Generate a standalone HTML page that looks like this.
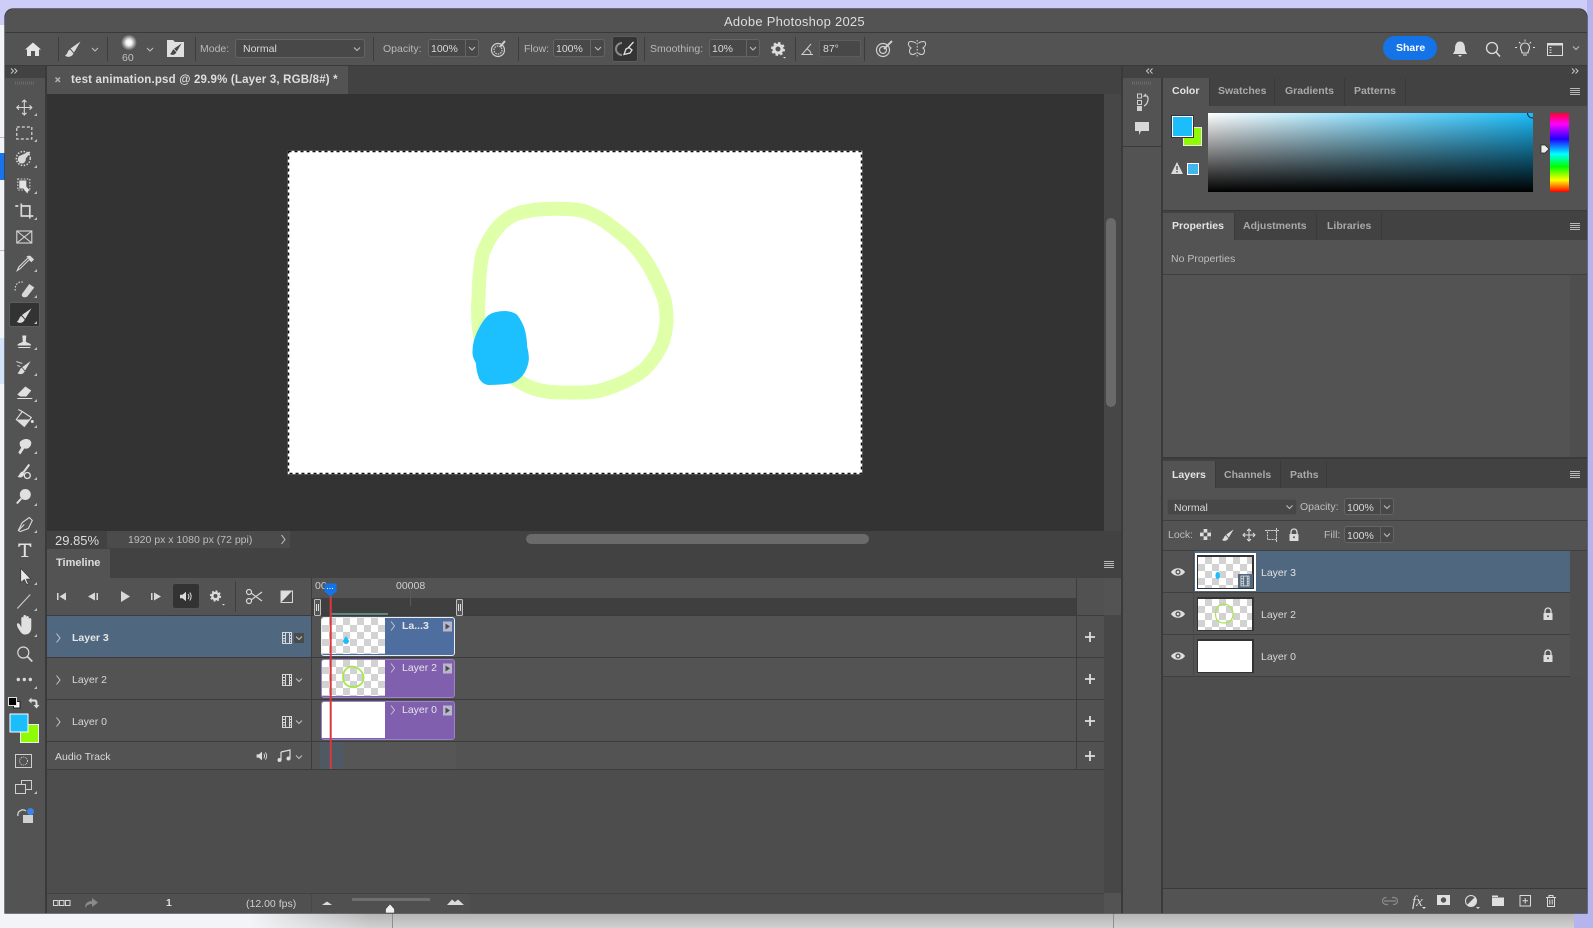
<!DOCTYPE html>
<html lang="en"><head><meta charset="utf-8"><title>Adobe Photoshop 2025</title>
<style>
html,body{margin:0;padding:0}
body{width:1593px;height:928px;position:relative;overflow:hidden;background:#f3f4f7;font-family:"Liberation Sans",sans-serif;font-size:11px;color:#cfcfcf}
.r{position:absolute;box-sizing:border-box}
.t{position:absolute;white-space:nowrap;line-height:16px;height:16px}
.b{font-weight:bold}
.i{background:#484848;border:1px solid #646464;border-radius:3px}
.ck{background:repeating-conic-gradient(#d2d2d2 0 25%,#fff 0 50%) 0 0/14px 14px}
svg{position:absolute;left:0;top:0}
</style></head><body>

<!-- outside window -->
<div class="r" style="left:0;top:0;width:1593px;height:25px;background:#cdcdf8"></div>
<div class="r" style="left:1587px;top:0;width:6px;height:928px;background:#b5b4ec"></div>
<div class="r" style="left:0;top:153px;width:5px;height:27px;background:#1a73e8"></div>
<div class="r" style="left:0;top:137px;width:5px;height:1px;background:#bbb"></div>
<div class="r" style="left:0;top:250px;width:5px;height:1px;background:#bbb"></div>
<div class="r" style="left:0;top:338px;width:5px;height:46px;background:#d5e3fa"></div>
<div class="r" style="left:0;top:913px;width:1574px;height:15px;background:linear-gradient(to bottom,rgba(243,244,247,0),rgba(243,244,247,.45)),linear-gradient(to right,#f3f4f7 250px,#b4b4b4 370px)"></div>
<div class="r" style="left:1574px;top:913px;width:19px;height:15px;background:#b5b4ec"></div>
<div class="r" style="left:392px;top:913px;width:1px;height:15px;background:#8e8e8e"></div>
<div class="r" style="left:1113px;top:913px;width:1px;height:15px;background:#8e8e8e"></div>

<!-- window -->
<div class="r" style="left:5px;top:9px;width:1582px;height:904px;background:#535353;border-radius:8px 8px 0 0;box-shadow:0 0 0 .6px #2f2f2f"></div>
<div class="r" style="left:5px;top:32px;width:1582px;height:1px;background:#3a3a3a"></div>
<div class="r" style="left:5px;top:65px;width:1582px;height:1px;background:#3a3a3a"></div>

<!-- left toolbar -->
<div class="r" style="left:5px;top:66px;width:40px;height:12px;background:#424242"></div>
<div class="r" style="left:45px;top:66px;width:2px;height:847px;background:#3a3a3a"></div>
<div class="r" style="left:9px;top:302px;width:31px;height:25px;background:#333;border:1px solid #5c5c5c;border-radius:2px"></div>

<!-- doc area -->
<div class="r" style="left:47px;top:66px;width:1074px;height:28px;background:#424242"></div>
<div class="r" style="left:47px;top:66px;width:301px;height:28px;background:#535353"></div>
<div class="r" style="left:47px;top:94px;width:1057px;height:437px;background:#333333"></div>
<div class="r" style="left:1104px;top:94px;width:17px;height:437px;background:#474747"></div>
<div class="r" style="left:1106px;top:218px;width:10px;height:189px;background:#6a6a6a;border-radius:5px"></div>
<div class="r" style="left:47px;top:531px;width:1074px;height:17px;background:#424242"></div>
<div class="r" style="left:107px;top:531px;width:183px;height:17px;background:#4b4b4b"></div>
<div class="r" style="left:526px;top:534px;width:343px;height:10px;background:#6a6a6a;border-radius:5px"></div>

<div class="t b" style="left:71px;top:72px;font-size:11.5px;color:#dedede;letter-spacing:.18px">test animation.psd @ 29.9% (Layer 3, RGB/8#) *</div>
<div class="t" style="left:55px;top:533px;font-size:13px;color:#dcdcdc">29.85%</div>
<div class="t" style="left:128px;top:532px;font-size:10.5px;color:#bdbdbd">1920 px x 1080 px (72 ppi)</div>

<!-- timeline -->
<div class="r" style="left:47px;top:548px;width:1057px;height:365px;background:#4d4d4d"></div>
<div class="r" style="left:1104px;top:548px;width:17px;height:365px;background:#474747"></div>
<div class="r" style="left:47px;top:548px;width:1074px;height:30px;background:#424242"></div>
<div class="r" style="left:47px;top:549px;width:63px;height:29px;background:#535353"></div>
<div class="t b" style="left:56px;top:555px;color:#dedede">Timeline</div>
<div class="r" style="left:47px;top:578px;width:1074px;height:37px;background:#535353"></div>
<div class="r" style="left:1076px;top:578px;width:1px;height:191px;background:#3c3c3c"></div>
<div class="r" style="left:1077px;top:578px;width:27px;height:191px;background:#515151"></div>
<div class="r" style="left:312px;top:598px;width:764px;height:17px;background:#3f3f3f"></div>
<div class="r" style="left:311px;top:578px;width:1px;height:191px;background:#3c3c3c"></div>
<div class="r" style="left:172px;top:583px;width:28px;height:26px;background:#333;border:1px solid #555;border-radius:3px"></div>
<div class="r" style="left:235px;top:581px;width:1px;height:31px;background:#3f3f3f"></div>
<div class="t" style="left:315px;top:578px;font-size:10.5px;color:#d0d0d0">00</div>
<div class="t" style="left:396px;top:578px;font-size:10.5px;color:#d0d0d0">00008</div>
<div class="r" style="left:331px;top:613px;width:57px;height:2px;background:#5f8a86"></div>

<!-- tracks -->
<div class="r" style="left:47px;top:615px;width:1057px;height:1px;background:#3c3c3c"></div>
<div class="r" style="left:47px;top:616px;width:264px;height:41px;background:#4f677f"></div>
<div class="r" style="left:312px;top:616px;width:764px;height:41px;background:#535353"></div>
<div class="r" style="left:47px;top:658px;width:264px;height:41px;background:#535353"></div>
<div class="r" style="left:312px;top:658px;width:764px;height:41px;background:#535353"></div>
<div class="r" style="left:47px;top:700px;width:264px;height:41px;background:#535353"></div>
<div class="r" style="left:312px;top:700px;width:764px;height:41px;background:#535353"></div>
<div class="r" style="left:47px;top:742px;width:264px;height:27px;background:#535353"></div>
<div class="r" style="left:312px;top:742px;width:764px;height:27px;background:#535353"></div>
<div class="r" style="left:320px;top:742px;width:24px;height:27px;background:#4f5964"></div>
<div class="r" style="left:344px;top:742px;width:112px;height:27px;background:#565656"></div>
<div class="r" style="left:47px;top:657px;width:1057px;height:1px;background:#3c3c3c"></div>
<div class="r" style="left:47px;top:699px;width:1057px;height:1px;background:#3c3c3c"></div>
<div class="r" style="left:47px;top:741px;width:1057px;height:1px;background:#3c3c3c"></div>
<div class="r" style="left:47px;top:769px;width:1057px;height:1px;background:#3c3c3c"></div>
<div class="r" style="left:294px;top:633px;width:10px;height:10px;background:#4a4a4a"></div>

<div class="t b" style="left:72px;top:630px;color:#e6e6e6;font-size:10.5px">Layer 3</div>
<div class="t" style="left:72px;top:672px;color:#d8d8d8;font-size:10.5px">Layer 2</div>
<div class="t" style="left:72px;top:714px;color:#d8d8d8;font-size:10.5px">Layer 0</div>
<div class="t" style="left:55px;top:749px;color:#d8d8d8;font-size:10.5px">Audio Track</div>

<!-- clips -->
<div class="r" style="left:321px;top:617px;width:134px;height:39px;background:#4f6ea0;border:1.5px solid #e6edf5;border-radius:3px;overflow:hidden"><div class="r ck" style="left:0;top:0;width:63px;height:36px"></div></div>
<div class="r" style="left:321px;top:659px;width:134px;height:39px;background:#7f5fae;border:1.5px solid #9c82c8;border-radius:3px;overflow:hidden"><div class="r ck" style="left:0;top:0;width:63px;height:36px"></div></div>
<div class="r" style="left:321px;top:701px;width:134px;height:39px;background:#7f5fae;border:1.5px solid #9c82c8;border-radius:3px;overflow:hidden"><div class="r" style="left:0;top:0;width:63px;height:36px;background:#fff"></div></div>
<div class="t b" style="left:402px;top:618px;font-size:10.5px;color:#e6e6e6">La...3</div>
<div class="t" style="left:402px;top:660px;font-size:10.5px;color:#e6e6e6">Layer 2</div>
<div class="t" style="left:402px;top:702px;font-size:10.5px;color:#e6e6e6">Layer 0</div>

<!-- timeline bottom -->
<div class="r" style="left:47px;top:893px;width:1057px;height:1px;background:#424242"></div>
<div class="r" style="left:47px;top:894px;width:423px;height:19px;background:#505050"></div>
<div class="r" style="left:1104px;top:893px;width:17px;height:20px;background:#535353"></div>
<div class="r" style="left:311px;top:894px;width:1px;height:19px;background:#484848"></div>
<div class="r" style="left:352px;top:898px;width:78px;height:3px;background:#6f6f6f"></div>
<div class="t b" style="left:166px;top:895px;font-size:10.5px;color:#dedede">1</div>
<div class="t" style="left:246px;top:896px;font-size:10.5px;color:#cfcfcf">(12.00 fps)</div>

<!-- panel column -->
<div class="r" style="left:1121px;top:66px;width:2px;height:847px;background:#3a3a3a"></div>
<div class="r" style="left:1123px;top:66px;width:464px;height:12px;background:#424242"></div>
<div class="r" style="left:1161px;top:78px;width:2px;height:835px;background:#3a3a3a"></div>
<div class="r" style="left:1123px;top:146px;width:38px;height:1px;background:#3a3a3a"></div>

<!-- color panel -->
<div class="r" style="left:1163px;top:78px;width:424px;height:28px;background:#424242"></div>
<div class="r" style="left:1163px;top:78px;width:46px;height:28px;background:#535353"></div>
<div class="r" style="left:1209px;top:78px;width:66px;height:28px;border-left:1px solid #3a3a3a;border-right:1px solid #3a3a3a"></div>
<div class="r" style="left:1275px;top:78px;width:70px;height:28px;border-right:1px solid #3a3a3a"></div>
<div class="r" style="left:1345px;top:78px;width:61px;height:28px;border-right:1px solid #3a3a3a"></div>
<div class="t b" style="left:1172px;top:83px;font-size:10.5px;color:#e4e4e4">Color</div>
<div class="t b" style="left:1218px;top:83px;font-size:10.5px;color:#a9a9a9">Swatches</div>
<div class="t b" style="left:1285px;top:83px;font-size:10.5px;color:#a9a9a9">Gradients</div>
<div class="t b" style="left:1354px;top:83px;font-size:10.5px;color:#a9a9a9">Patterns</div>
<div class="r" style="left:1208px;top:113px;width:325px;height:79px;background:linear-gradient(to bottom,rgba(0,0,0,0),#000),linear-gradient(to right,#fff,#1cbdfb)"></div>
<div class="r" style="left:1550px;top:113px;width:19px;height:79px;background:linear-gradient(#ff0030,#ff00ff 14%,#2000ff 33%,#00ffff 52%,#00ff00 68%,#ffff00 85%,#ff0000)"></div>
<div class="r" style="left:1183px;top:127px;width:19px;height:19px;background:#8ffc05;border:1px solid #e8e8e8"></div>
<div class="r" style="left:1172px;top:116px;width:21px;height:21px;background:#1cbdfb;border:1px solid #fff;outline:1px solid #333"></div>
<div class="r" style="left:1187px;top:163px;width:12px;height:12px;background:#42b6ea;border:1px solid #fff"></div>
<div class="r" style="left:1163px;top:210px;width:424px;height:1px;background:#3a3a3a"></div>

<!-- properties -->
<div class="r" style="left:1163px;top:211px;width:424px;height:29px;background:#424242"></div>
<div class="r" style="left:1163px;top:213px;width:71px;height:27px;background:#535353"></div>
<div class="r" style="left:1234px;top:213px;width:83px;height:27px;border-left:1px solid #3a3a3a;border-right:1px solid #3a3a3a"></div>
<div class="r" style="left:1317px;top:213px;width:65px;height:27px;border-right:1px solid #3a3a3a"></div>
<div class="t b" style="left:1172px;top:218px;font-size:10.5px;color:#e4e4e4">Properties</div>
<div class="t b" style="left:1243px;top:218px;font-size:10.5px;color:#a9a9a9">Adjustments</div>
<div class="t b" style="left:1327px;top:218px;font-size:10.5px;color:#a9a9a9">Libraries</div>
<div class="t" style="left:1171px;top:251px;font-size:10.5px;color:#bdbdbd">No Properties</div>
<div class="r" style="left:1163px;top:274px;width:424px;height:1px;background:#3f3f3f"></div>
<div class="r" style="left:1570px;top:275px;width:17px;height:182px;background:#4e4e4e"></div>
<div class="r" style="left:1163px;top:457px;width:424px;height:2px;background:#3a3a3a"></div>

<!-- layers -->
<div class="r" style="left:1163px;top:459px;width:424px;height:29px;background:#424242"></div>
<div class="r" style="left:1163px;top:461px;width:52px;height:27px;background:#535353"></div>
<div class="r" style="left:1215px;top:461px;width:66px;height:27px;border-left:1px solid #3a3a3a;border-right:1px solid #3a3a3a"></div>
<div class="r" style="left:1281px;top:461px;width:46px;height:27px;border-right:1px solid #3a3a3a"></div>
<div class="t b" style="left:1172px;top:467px;font-size:10.5px;color:#e4e4e4">Layers</div>
<div class="t b" style="left:1224px;top:467px;font-size:10.5px;color:#a9a9a9">Channels</div>
<div class="t b" style="left:1290px;top:467px;font-size:10.5px;color:#a9a9a9">Paths</div>

<div class="r" style="left:1167px;top:499px;width:130px;height:16px;background:#474747;border:1px solid #4f4f4f;border-radius:3px"></div>
<div class="t" style="left:1174px;top:500px;font-size:10.5px;color:#dadada">Normal</div>
<div class="t" style="left:1300px;top:499px;font-size:10.5px;color:#bdbdbd">Opacity:</div>
<div class="r i" style="left:1344px;top:498px;width:50px;height:17px"></div>
<div class="r" style="left:1380px;top:498px;width:1px;height:17px;background:#646464"></div>
<div class="t" style="left:1347px;top:500px;font-size:10.5px;color:#dadada">100%</div>
<div class="r" style="left:1163px;top:520px;width:424px;height:1px;background:#3f3f3f"></div>
<div class="t" style="left:1168px;top:527px;font-size:10.5px;color:#bdbdbd">Lock:</div>
<div class="t" style="left:1324px;top:527px;font-size:10.5px;color:#bdbdbd">Fill:</div>
<div class="r i" style="left:1344px;top:526px;width:50px;height:17px"></div>
<div class="r" style="left:1380px;top:526px;width:1px;height:17px;background:#646464"></div>
<div class="t" style="left:1347px;top:528px;font-size:10.5px;color:#dadada">100%</div>

<div class="r" style="left:1163px;top:550px;width:424px;height:1px;background:#3f3f3f"></div>
<div class="r" style="left:1193px;top:551px;width:377px;height:41px;background:#4f677f"></div>
<div class="r" style="left:1163px;top:592px;width:407px;height:1px;background:#3f3f3f"></div>
<div class="r" style="left:1163px;top:634px;width:407px;height:1px;background:#3f3f3f"></div>
<div class="r" style="left:1163px;top:676px;width:407px;height:1px;background:#3f3f3f"></div>
<div class="r" style="left:1163px;top:677px;width:424px;height:211px;background:#4d4d4d"></div>
<div class="r" style="left:1570px;top:551px;width:17px;height:126px;background:#4e4e4e"></div>
<div class="r" style="left:1193px;top:551px;width:1px;height:126px;background:#484848"></div>

<div class="r" style="left:1195px;top:553px;width:61px;height:38px;background:#fff"></div>
<div class="r" style="left:1197px;top:555px;width:57px;height:34px;background:#333"></div>
<div class="r ck" style="left:1198px;top:557px;width:54px;height:31px"></div>
<div class="r" style="left:1238px;top:574px;width:15px;height:14px;background:#4f677f"></div>
<div class="r" style="left:1197px;top:597px;width:57px;height:34px;background:#333"></div>
<div class="r ck" style="left:1198px;top:599px;width:54px;height:31px"></div>
<div class="r" style="left:1197px;top:639px;width:57px;height:34px;background:#333"></div>
<div class="r" style="left:1198px;top:641px;width:54px;height:31px;background:#fff"></div>
<div class="t" style="left:1261px;top:565px;font-size:10.5px;color:#e2e2e2">Layer 3</div>
<div class="t" style="left:1261px;top:607px;font-size:10.5px;color:#d8d8d8">Layer 2</div>
<div class="t" style="left:1261px;top:649px;font-size:10.5px;color:#d8d8d8">Layer 0</div>
<div class="r" style="left:1163px;top:888px;width:424px;height:1px;background:#3a3a3a"></div>
<div class="r" style="left:1163px;top:889px;width:424px;height:24px;background:#535353"></div>

<!-- options bar -->
<div class="r" style="left:58px;top:37px;width:1px;height:24px;background:#3d3d3d"></div>
<div class="r" style="left:107px;top:37px;width:1px;height:24px;background:#3d3d3d"></div>
<div class="r" style="left:195px;top:37px;width:1px;height:24px;background:#3d3d3d"></div>
<div class="r" style="left:373px;top:37px;width:1px;height:24px;background:#3d3d3d"></div>
<div class="r" style="left:518px;top:37px;width:1px;height:24px;background:#3d3d3d"></div>
<div class="r" style="left:644px;top:37px;width:1px;height:24px;background:#3d3d3d"></div>
<div class="r" style="left:795px;top:37px;width:1px;height:24px;background:#3d3d3d"></div>
<div class="r" style="left:864px;top:37px;width:1px;height:24px;background:#3d3d3d"></div>
<div class="r i" style="left:235px;top:39px;width:130px;height:19px"></div>
<div class="r i" style="left:428px;top:39px;width:51px;height:18px"></div>
<div class="r" style="left:465px;top:39px;width:1px;height:18px;background:#646464"></div>
<div class="r i" style="left:553px;top:39px;width:52px;height:18px"></div>
<div class="r" style="left:590px;top:39px;width:1px;height:18px;background:#646464"></div>
<div class="r" style="left:612px;top:36px;width:26px;height:26px;background:#343434;border:1px solid #5c5c5c;border-radius:3px"></div>
<div class="r i" style="left:709px;top:39px;width:51px;height:18px"></div>
<div class="r" style="left:746px;top:39px;width:1px;height:18px;background:#646464"></div>
<div class="r" style="left:819px;top:40px;width:42px;height:17px;background:#484848;border:1px solid #5c5c5c"></div>
<div class="r" style="left:1383px;top:36px;width:54px;height:24px;border-radius:12px;background:#1473e6"></div>

<div class="t" style="left:724px;top:14px;font-size:13px;color:#dddddd;letter-spacing:.25px">Adobe Photoshop 2025</div>
<div class="t" style="left:122px;top:50px;font-size:10.5px;color:#c0c0c0">60</div>
<div class="t" style="left:200px;top:41px;font-size:10.5px;color:#b8b8b8">Mode:</div>
<div class="t" style="left:243px;top:41px;font-size:10.5px;color:#dadada">Normal</div>
<div class="t" style="left:383px;top:41px;font-size:10.5px;color:#b8b8b8">Opacity:</div>
<div class="t" style="left:431px;top:41px;font-size:10.5px;color:#dadada">100%</div>
<div class="t" style="left:524px;top:41px;font-size:10.5px;color:#b8b8b8">Flow:</div>
<div class="t" style="left:556px;top:41px;font-size:10.5px;color:#dadada">100%</div>
<div class="t" style="left:650px;top:41px;font-size:10.5px;color:#b8b8b8">Smoothing:</div>
<div class="t" style="left:712px;top:41px;font-size:10.5px;color:#dadada">10%</div>
<div class="t" style="left:823px;top:41px;font-size:10.5px;color:#dadada">87°</div>
<div class="t b" style="left:1396px;top:40px;font-size:10.5px;color:#fff">Share</div>

<svg width="1593" height="928" viewBox="0 0 1593 928" xmlns="http://www.w3.org/2000/svg">
<defs>
<radialGradient id="bp"><stop offset="0" stop-color="#fff"/><stop offset=".35" stop-color="#f4f4f4"/><stop offset="1" stop-color="#eee" stop-opacity="0"/></radialGradient>
<path id="ch" d="M-3-1.5 0 1.5 3-1.5" fill="none" stroke="#bdbdbd" stroke-width="1.1"/>
<path id="rc" d="M-1.5-4.5 2 0-1.5 4.5" fill="none" stroke="#c4c4c4" stroke-width="1"/>
<g id="brush" fill="#dcdcdc"><path d="M7.500-7.500-2.500-.5 1 3.500Z"/><path d="M-3 .5C-5.500 1-5 5-8 6.500-6 8.500-1.500 8.500 .5 4.500Z"/></g>
<path id="ct" d="M0 0-3 3H0Z" fill="#c0c0c0"/>
<path id="ham" d="M-5-2.500H5M-5-.5H5M-5 1.500H5M-5 3.500H5" stroke="#b8b8b8" stroke-width=".9"/>
<g id="film" fill="none" stroke="#d8d8d8" stroke-width="1"><rect x="-4.500" y="-5.500" width="9" height="11"/><path d="M-1.500-5.500V5.500M2.500-5.500V5.500M-4.500-2.500H-1.500M-4.500 .5H-1.500M-4.500 3H-1.500M2.500-2.500H4.500M2.500 .5H4.500M2.500 3H4.500"/></g>
<g id="eye"><path d="M-7 0C-4-5 4-5 7 0 4 5-4 5-7 0Z" fill="#dedede"/><circle r="2.600" fill="#535353"/><circle r="1.300" fill="#dedede"/></g>
<g id="lock" fill="#dcdcdc"><rect x="-4.500" y="-1" width="9" height="7" rx=".5"/><path d="M-3-1V-3A3 3 0 0 1 3-3V-1" fill="none" stroke="#dcdcdc" stroke-width="1.300"/><circle cy="2.300" r="1" fill="#535353"/></g>
<g id="gear"><circle r="4" fill="none" stroke="#dcdcdc" stroke-width="3"/><circle r="6" fill="none" stroke="#dcdcdc" stroke-width="2" stroke-dasharray="2.400 2.300"/></g>
<path id="plus" d="M-5 0H5M0-5V5" stroke="#dedede" stroke-width="1.800"/>
<g id="arrowbox"><rect x="-4.500" y="-5" width="9" height="10" fill="#b8b8c8"/><path d="M-2-3 2.500 0-2 3Z" fill="#4a4a5a"/></g>
<g id="speaker"><path d="M-6-1.800H-3.500L0-4.800V4.800L-3.500 1.800H-6Z" fill="#dcdcdc"/><path d="M2-2.500Q3.800 0 2 2.500M3.800-4Q6.500 0 3.800 4" fill="none" stroke="#dcdcdc"/></g>
</defs>

<!-- canvas -->
<rect x="288" y="151" width="574" height="323" fill="#fff"/>
<rect x="288.500" y="151.500" width="573" height="322" fill="none" stroke="#fff" stroke-width="1.500"/>
<rect x="288.500" y="151.500" width="573" height="322" fill="none" stroke="#111" stroke-width="1.500" stroke-dasharray="3 3"/>
<path d="M482.800 353 C478 330 477.500 310 478.600 296.700 C479 280 480 265 482.800 253.300 C488 240 493 232 500 225 C508 217 516 213 524.900 211.700 C535 209 545 208.700 555.500 208.700 C565 208.700 574 209 582.300 210.700 C591 213 598 217 605.300 221.700 C615 229 624 236 632 243.300 C640 252 647 262 653.100 273.300 C658 283 662 292 664.600 300 C666 308 667 315 666.500 323.300 C665.500 332 664 340 660.800 346.700 C656 356 650 364 643.600 370 C636 376 627 381 616.800 385 C607 389 597 392.300 586.200 392.300 C575 393 565 392.500 555.500 392.300 C546 392 537 390 528.800 386.700 C521 383 515 379 509.600 375" fill="none" stroke="#dfffa8" stroke-width="14" stroke-linejoin="round"/>
<path d="M505.800 311C511 311.500 515 313 517.300 315 521 320 523.500 325 524.900 330 526.500 336 527 342 527.200 346.700 528.500 352 529 356 528.800 360 528 366 526 371 523 375 520 379 516 382 511.500 383.300 504 384.500 496 385 488.600 385 484 384.500 481 382 479 378.300 477 373 476 368 476 363.300 473.500 359 472.300 355 472.500 351.700 472.500 346 473.500 341 475.200 336.700 478 329 482 322 486.700 316.700 491 312.500 498 311 505.800 311Z" fill="#1cc0ff"/>

<!-- top strip chevrons -->
<g fill="none" stroke="#cfcfcf" stroke-width=".9">
<path d="M11 68.500 13.500 71 11 73.500M14.500 68.500 17 71 14.500 73.500"/>
<path d="M1152.500 68.500 1150 71 1152.500 73.500M1149 68.500 1146.500 71 1149 73.500"/>
<path d="M1572 68.500 1574.500 71 1572 73.500M1575.500 68.500 1578 71 1575.500 73.500"/>
</g>
<!-- doc tab close -->
<path d="M55.500 77.500 60 82M60 77.500 55.500 82" stroke="#b0b0b0" stroke-width="1.500"/>

<!-- options icons -->
<path d="M25 49.500 33 42.500 41 49.500H39V56H35V51H31V56H27V49.500Z" fill="#e4e4e4"/>
<use href="#brush" transform="translate(73,49)"/>
<use href="#ch" transform="translate(95,49.500)"/>
<circle cx="129" cy="42.500" r="8" fill="url(#bp)"/>
<use href="#ch" transform="translate(150,49.500)"/>
<path d="M167 40H173L175 42H184V57H167Z" fill="#e0e0e0"/>
<g transform="translate(176,49) scale(.75)"><path d="M7.500-7.500-2.500-.5 1 3.500Z" fill="#484848"/><path d="M-3 .5C-5.500 1-5 5-8 6.500-6 8.500-1.500 8.500 .5 4.500Z" fill="#484848"/></g>
<use href="#ch" transform="translate(357,49)"/>
<use href="#ch" transform="translate(472,48.500)"/>
<use href="#ch" transform="translate(598,48.500)"/>
<use href="#ch" transform="translate(753,48.500)"/>
<g fill="none" stroke="#cfcfcf" stroke-width="1.200">
<circle cx="498" cy="50" r="6.500"/>
<circle cx="498" cy="50" r="4" stroke-dasharray="1.500 1"/>
<path d="M500 47 505 41" stroke-width="2"/>
<circle cx="883" cy="50" r="6.500"/><circle cx="883" cy="50" r="3.500"/>
<path d="M884 49 892 41" stroke-width="2"/>
<path d="M813 54.500H802L811 44M807 49Q811 51 811 54.500" stroke-width="1"/>
</g>
<path d="M622 43A6 6 0 0 0 622 55" fill="none" stroke="#8a8a8a" stroke-width="2"/>
<path d="M633.500 42 628 48M624 54.500 626 49 629 47.500 632 50 630 53Z" fill="none" stroke="#e0e0e0" stroke-width="1.300"/>
<use href="#gear" transform="translate(778,49)"/>
<path d="M783 57H786L784.500 58.500Z" fill="#ddd"/>
<g fill="none" stroke="#cfcfcf" stroke-width="1.100">
<path d="M916 43C912 41 909 41 908.500 43 908 45 909.500 47 911 48 909.500 49 909 51 910 53 911 55 914 55 916 53"/>
<path d="M918.500 43C922 41 925 41 925.500 43 926 45 924.500 47 923 48 924.500 49 925 51 924 53 923 55 920 55 918.500 53"/>
<path d="M917.200 40V58" stroke-dasharray="1.500 1.500"/>
</g>
<path d="M1460 41.500C1463.500 41.500 1465 44.500 1465 49 1465 52 1467 53 1467 54H1453C1453 53 1455 52 1455 49 1455 44.500 1456.500 41.500 1460 41.500Z M1458 55H1462L1460 57Z" fill="#dcdcdc"/>
<circle cx="1492" cy="48" r="5.500" fill="none" stroke="#dcdcdc" stroke-width="1.300"/><path d="M1496 52 1500 56.500" stroke="#dcdcdc" stroke-width="1.500"/>
<g fill="none" stroke="#dcdcdc"><path d="M1522 53C1522 50 1520.500 50 1520.500 47.500A4.500 4.500 0 0 1 1529.500 47.500C1529.500 50 1528 50 1528 53Z" stroke-width="1.100"/><path d="M1523 55H1527M1525 39.500V41.500M1517 47.500H1515M1535 47.500H1533M1519 42 1520.500 43.500M1531 42 1529.500 43.500" stroke-width="1"/></g>
<rect x="1547.500" y="43.500" width="15" height="12" fill="none" stroke="#dcdcdc"/><path d="M1547.500 44.500H1562.500" stroke="#dcdcdc" stroke-width="2"/><path d="M1549.500 47.500H1551.500M1549.500 50H1551.500M1549.500 52.500H1551.500" stroke="#dcdcdc"/>
<use href="#ch" transform="translate(1576,48)"/>

<!-- toolbar grip -->
<path d="M15 83H34" stroke="#6a6a6a" stroke-width="3" stroke-dasharray="1 1"/>
<path d="M1132 83H1151" stroke="#6a6a6a" stroke-width="3" stroke-dasharray="1 1"/>

<!-- toolbar icons -->
<g transform="translate(0.3,0.5)">
<g fill="none" stroke="#d8d8d8" stroke-width="1.100">
<path d="M16.500 107H31.500M24 99.500V114.500M21.800 101.700 24 99.500 26.200 101.700M21.800 112.300 24 114.500 26.200 112.300M18.700 104.800 16.500 107 18.700 109.200M29.300 104.800 31.500 107 29.300 109.200"/>
<rect x="16.500" y="126.500" width="15" height="12" stroke-dasharray="3 2" stroke-width="1.200"/>
<circle cx="23" cy="158" r="7" stroke-dasharray="1.500 1.500" stroke-width="1.500"/>
<rect x="17.500" y="178.500" width="12" height="11" stroke-dasharray="1.500 1.500"/>
<path d="M15 205.500H18M21 203V215.500H30M21 205.500H29.500V215M29.500 215.500V218M30 215.500H33" stroke-width="1.700"/>
<rect x="16.500" y="230.500" width="15" height="12"/><path d="M16.500 230.500 31.500 242.500M31.500 230.500 16.500 242.500"/>
<path d="M30 256 33 259 31 261 29 259 20 268 17 270 18.500 266.500 27 258Z" fill="none" stroke-width="1.100"/>
<path d="M15 290C14 283 20 280 23 282" stroke-dasharray="1.500 1.500"/>
</g>
<path d="M29 255 33 259 31 261 29 259 26 256Z" fill="#d8d8d8"/>
<circle cx="21.500" cy="159" r="4" fill="#d8d8d8"/>
<path d="M18 156 29 151 30 152 24 160Z" fill="#d8d8d8"/>
<path d="M19 180H26V186L29.500 190 28 190.500 27 193 23 188H19Z" fill="#e4e4e4"/>
<path d="M22 293 29 283.500 34 287 27 296C24 298 20 296 22 293Z" fill="#d8d8d8"/>
<use href="#brush" transform="translate(24,315) scale(.95)"/>
<path d="M22 335H26L25.500 341C27 343 30 342 31 345H17C18 342 21 343 22.500 341Z" fill="#e0e0e0"/><path d="M18 347H30" stroke="#e0e0e0"/>
<use href="#brush" transform="translate(24,367) scale(.85)"/>
<path d="M16 361 22 363M17 365 20 366" stroke="#ccc"/>
<path d="M17 394 25 386 31 390 26 396H20Z" fill="#e0e0e0"/><path d="M17 398H32" stroke="#e0e0e0"/>
<path d="M22 411 16 419 24 426 31 417ZM22 411 18 409" fill="none" stroke="#e0e0e0" stroke-width="1.100"/><path d="M17 419H29L24 426Z" fill="#e0e0e0"/><circle cx="32" cy="421" r="1.500" fill="#e0e0e0"/>
<path d="M20 441C24 437 30 438 31 442 31 447 27 449 24 448L20 454 18 452 21 447C19 445 19 442 20 441Z" fill="#e0e0e0"/>
<path d="M29 464 23 472" stroke="#e0e0e0" stroke-width="2"/><path d="M22 471C19 472 19 476 17 476 20 478 23 477 24 473Z" fill="#e0e0e0"/><circle cx="27" cy="475" r="3" fill="none" stroke="#e0e0e0" stroke-width="1.300"/>
<circle cx="25" cy="494" r="5.500" fill="#e0e0e0"/><path d="M21 498 16.500 503" stroke="#e0e0e0" stroke-width="2"/>
<path d="M29 517 32 520 28 528 20 531 18 530 22 522ZM18 530 24 524" fill="none" stroke="#d8d8d8" stroke-width="1.100"/>
<path d="M18 543H31V546.500H30C29.500 545 29 544.500 27 544.500H25.500V555.500H28V556.500H21V555.500H23.500V544.500H22C20 544.500 19.500 545 19 546.500H18Z" fill="#e0e0e0"/>
<path d="M20.500 568V582L24 579 26.500 584 28 583.500 26 578.500H30.500Z" fill="#e8e8e8" stroke="#333" stroke-width=".6"/>
<path d="M17 608 30 594" stroke="#c8c8c8" stroke-width="1.200"/>
<path d="M20 631C17 627 16 624 17 623 19 622 20 625 21 627V618C21 616 23 616 23 618V622 616C23 614 26 614 26 616V622 617C26 615 28.500 615 28.500 617V623 619C28.500 617 31 617 31 619V627C31 632 28 634 25 634 22.500 634 21.500 633 20 631Z" fill="#e0e0e0"/>
<circle cx="23" cy="652" r="5.500" fill="none" stroke="#d8d8d8" stroke-width="1.200"/><path d="M27 656 32 661" stroke="#d8d8d8" stroke-width="1.600"/>
<circle cx="18" cy="679" r="1.700" fill="#d8d8d8"/><circle cx="24" cy="679" r="1.700" fill="#d8d8d8"/><circle cx="30" cy="679" r="1.700" fill="#d8d8d8"/>
</g>
<!-- tool corner triangles -->
<use href="#ct" transform="translate(37,113)"/><use href="#ct" transform="translate(37,139)"/><use href="#ct" transform="translate(37,165)"/><use href="#ct" transform="translate(37,191)"/><use href="#ct" transform="translate(37,217)"/><use href="#ct" transform="translate(37,269)"/><use href="#ct" transform="translate(37,295)"/><use href="#ct" transform="translate(37,321)"/><use href="#ct" transform="translate(37,347)"/><use href="#ct" transform="translate(37,373)"/><use href="#ct" transform="translate(37,399)"/><use href="#ct" transform="translate(37,425)"/><use href="#ct" transform="translate(37,451)"/><use href="#ct" transform="translate(37,477)"/><use href="#ct" transform="translate(37,503)"/><use href="#ct" transform="translate(37,530)"/><use href="#ct" transform="translate(37,582)"/><use href="#ct" transform="translate(37,608)"/><use href="#ct" transform="translate(37,634)"/><use href="#ct" transform="translate(37,686)"/><use href="#ct" transform="translate(37,791)"/>
<!-- defaults / swap -->
<rect x="13.500" y="701.500" width="6.500" height="6.500" fill="#fff" stroke="#222"/>
<rect x="8.500" y="697.500" width="8" height="8" fill="#000" stroke="#ddd"/>
<path d="M28.500 700.500 31.500 697.500V699.500H35Q37.500 699.500 37.500 703V705H39.500L36.500 708.500 33.500 705H35.500V703Q35.500 701.500 34 701.500H31.500V703.500Z" fill="#dcdcdc"/>
<rect x="20.500" y="724.500" width="18" height="18" fill="#8ffc05" stroke="#eee"/>
<rect x="10" y="714" width="18" height="18" fill="#1cbdfb" stroke="#fff" stroke-width="1"/>
<rect x="15.500" y="754.500" width="16" height="13" fill="none" stroke="#cfcfcf"/><circle cx="23.500" cy="761" r="4" fill="none" stroke="#cfcfcf" stroke-dasharray="1 1"/>
<rect x="21.500" y="780.500" width="10" height="9" fill="none" stroke="#cfcfcf"/><rect x="15.500" y="784.500" width="10" height="9" fill="#535353" stroke="#cfcfcf"/>
<path d="M18 816A5 5 0 0 1 26 811" fill="none" stroke="#d0d0d0" stroke-width="1.300"/><rect x="23" y="815" width="10" height="8" fill="#d0d0d0"/><circle cx="30.500" cy="811.500" r="3.500" fill="#3a82e6"/>

<!-- panel col -->
<path d="M1137.500 94h4v4h-4zM1137.500 100.500h4v4h-4z" fill="none" stroke="#cfcfcf"/><rect x="1137" y="106" width="5" height="5" fill="#cfcfcf"/>
<path d="M1146 94 1144 96H1147C1149 98 1148 104 1144 106" fill="none" stroke="#cfcfcf" stroke-width="1.300"/>
<path d="M1135 122H1149V131H1141L1139 135V131H1135Z" fill="#d8d8d8"/>
<use href="#ham" transform="translate(1575,91)"/>
<use href="#ham" transform="translate(1575,226)"/>
<use href="#ham" transform="translate(1575,474)"/>
<use href="#ham" transform="translate(1109,564)"/>
<!-- colour -->
<path d="M1177 162 1183 174H1171Z" fill="#dcdcdc"/><rect x="1176.300" y="166" width="1.400" height="4" fill="#535353"/><rect x="1176.300" y="171" width="1.400" height="1.500" fill="#535353"/>
<path d="M1541 145H1545L1549 149 1545 153H1541Z" fill="#eee" stroke="#222" stroke-width=".7"/>
<path d="M1527.500 113A5 5 0 0 0 1533 118" fill="none" stroke="#123" stroke-width="1"/>

<!-- layers controls -->
<use href="#ch" transform="translate(1289.500,507)"/>
<use href="#ch" transform="translate(1387,507)"/>
<use href="#ch" transform="translate(1387,535)"/>
<g transform="translate(1200,529)"><rect width="11" height="11" fill="#dcdcdc"/><rect x="0" y="0" width="3.600" height="3.600" fill="#555"/><rect x="7.300" y="0" width="3.600" height="3.600" fill="#555"/><rect x="3.600" y="3.600" width="3.700" height="3.700" fill="#555"/><rect x="0" y="7.300" width="3.600" height="3.600" fill="#555"/><rect x="7.300" y="7.300" width="3.600" height="3.600" fill="#555"/></g>
<use href="#brush" transform="translate(1228,535) scale(.75)"/>
<path d="M1243 535H1255M1249 529V541M1247 531 1249 529 1251 531M1247 539 1249 541 1251 539M1245 533 1243 535 1245 537M1253 533 1255 535 1253 537" fill="none" stroke="#dcdcdc"/>
<path d="M1267.500 530.500H1276.500V539.500H1267.500ZM1265 530.500H1279M1276.500 528V542" fill="none" stroke="#d0d0d0" stroke-dasharray="2 1"/>
<use href="#lock" transform="translate(1294,535)"/>
<use href="#eye" transform="translate(1178,572)"/>
<use href="#eye" transform="translate(1178,614)"/>
<use href="#eye" transform="translate(1178,656)"/>
<use href="#lock" transform="translate(1548,614)"/>
<use href="#lock" transform="translate(1548,656)"/>
<ellipse cx="1217.700" cy="575.500" rx="2.300" ry="3.500" fill="#1cbdfb"/>
<path d="M1224 604C1229 604 1233 609 1233 614 1233 620 1229 623 1224 623 1219 623 1215.500 620 1215.500 614 1215.500 608 1219 604 1224 604Z" fill="none" stroke="#a3e84b" stroke-width="1.200"/>
<use href="#film" transform="translate(1245,581) scale(.9)"/>
<!-- layers footer -->
<path d="M1384 901H1396M1386.500 897.500H1386A3.500 3.500 0 0 0 1386 904.500H1388M1392 897.500H1394A3.500 3.500 0 0 1 1394 904.500H1393" fill="none" stroke="#8a8a8a" stroke-width="1.200"/>
<text x="1412" y="906" font-family="Liberation Serif,serif" font-style="italic" font-size="15" fill="#d8d8d8">fx</text><path d="M1422 907H1426L1424 909Z" fill="#ddd"/>
<rect x="1437" y="895" width="13" height="10" fill="#e0e0e0"/><circle cx="1443.500" cy="900" r="2.700" fill="#535353"/>
<circle cx="1471" cy="901" r="5.500" fill="#535353" stroke="#e0e0e0"/><path d="M1475 897A5.500 5.500 0 0 1 1467 905Z" fill="#e0e0e0"/><path d="M1476 907H1480L1478 909Z" fill="#ddd"/>
<path d="M1492 895.500H1498V897H1492ZM1492 897.500H1504V906H1492Z" fill="#e0e0e0"/>
<rect x="1520" y="895.500" width="10.500" height="10.500" fill="none" stroke="#dcdcdc"/><path d="M1522.500 900.700H1528M1525.200 898V903.500" stroke="#dcdcdc"/>
<path d="M1546 897.500H1556M1549 897.500V895.500H1553V897.500M1547.500 897.500V906.500H1554.500V897.500M1549.800 899.500V904.500M1552.200 899.500V904.500" fill="none" stroke="#dcdcdc"/>

<!-- timeline controls -->
<g fill="#d8d8d8">
<rect x="57" y="593" width="1.500" height="7"/><path d="M66 592.500V600.500L59.500 596.500Z"/>
<path d="M95 592.500V600.500L88 596.500Z"/><rect x="96.500" y="593" width="1.500" height="7"/>
<path d="M121 591V602L130 596.500Z"/>
<rect x="151" y="593" width="1.500" height="7"/><path d="M154 592.500V600.500L161 596.500Z"/>
</g>
<use href="#speaker" transform="translate(186,596.500)"/>
<use href="#gear" transform="translate(215.500,596) scale(.8)"/><path d="M222 604H225L223.500 605.500Z" fill="#ddd"/>
<g fill="none" stroke="#d8d8d8" stroke-width="1.200"><circle cx="249" cy="592" r="2.500"/><circle cx="249" cy="601" r="2.500"/><path d="M251 593 262 601M251 600 262 592"/></g>
<path d="M281 591H292L281 602.500Z" fill="#e0e0e0"/><rect x="281" y="591" width="11.500" height="11.500" fill="none" stroke="#d8d8d8"/>
<g><rect x="314.500" y="599.500" width="6" height="16" rx="1" fill="#555" stroke="#bcbcbc"/><path d="M316.500 604V611M318.500 604V611" stroke="#ddd"/>
<rect x="456.500" y="599.500" width="6" height="16" rx="1" fill="#555" stroke="#bcbcbc"/><path d="M458.500 604V611M460.500 604V611" stroke="#ddd"/></g>
<path d="M410.500 586V606" stroke="#5a5a5a"/>
<use href="#rc" transform="translate(58,638)"/><use href="#rc" transform="translate(58,680)"/><use href="#rc" transform="translate(58,722)"/>
<use href="#film" transform="translate(287,638)"/><use href="#film" transform="translate(287,680)"/><use href="#film" transform="translate(287,722)"/>
<use href="#ch" transform="translate(299,638)"/><use href="#ch" transform="translate(299,680)"/><use href="#ch" transform="translate(299,722)"/><use href="#ch" transform="translate(299,757)"/>
<use href="#speaker" transform="translate(262,756) scale(.9)"/>
<path d="M281 752 290 750V758.500M281 752V760" fill="none" stroke="#dcdcdc" stroke-width="1.200"/><circle cx="279.500" cy="760" r="2" fill="#dcdcdc"/><circle cx="288.500" cy="758.500" r="2" fill="#dcdcdc"/>
<use href="#plus" transform="translate(1090,637)"/><use href="#plus" transform="translate(1090,679)"/><use href="#plus" transform="translate(1090,721)"/><use href="#plus" transform="translate(1090,756)"/>
<use href="#rc" transform="translate(392.500,626)"/><use href="#rc" transform="translate(392.500,668)"/><use href="#rc" transform="translate(392.500,710)"/>
<use href="#arrowbox" transform="translate(447.500,626.500)"/><use href="#arrowbox" transform="translate(447.500,668.500)"/><use href="#arrowbox" transform="translate(447.500,710.500)"/>
<path d="M346 636 C348 639 349 640.500 349 641 A3 3 0 0 1 343 641 C343 640.500 344 639 346 636Z" fill="#1cbdfb"/>
<path d="M352 666.500C358 666.500 363.500 672 363.500 678 363.500 684 358 687 353 687 347 687 343 683 343 677 343 671 347 666.500 352 666.500Z" fill="none" stroke="#a3e84b" stroke-width="1.800"/>
<rect x="329.700" y="596" width="2" height="173" fill="#d9383f"/>
<path d="M324.500 583.500H336.500V591.500L330.500 596.500 324.500 591.500Z" fill="#1473e6"/>
<path d="M327 588.500H334.500" stroke="#fff" stroke-dasharray="1 1.500"/>
<use href="#rc" transform="translate(283,539.500)"/>
<!-- timeline bottom -->
<g fill="none" stroke="#d8d8d8"><rect x="53.500" y="900.500" width="4.500" height="5"/><rect x="59.500" y="900.500" width="4.500" height="5"/><rect x="65.500" y="900.500" width="4.500" height="5"/></g>
<path d="M85 908C85 903 88 901 92 901V898L98 902.500 92 907V904C89 904 87 905 85 908Z" fill="#8a8a8a"/>
<path d="M322 905 327 901.500 332 905Z" fill="#dcdcdc"/>
<path d="M447 905 452 899.500 455 902 458 899.500 464 905Z" fill="#dcdcdc"/>
<path d="M390 904 394.500 909V913H385.500V909Z" fill="#f0f0f0" stroke="#222" stroke-width=".5"/>
</svg>
</body></html>
